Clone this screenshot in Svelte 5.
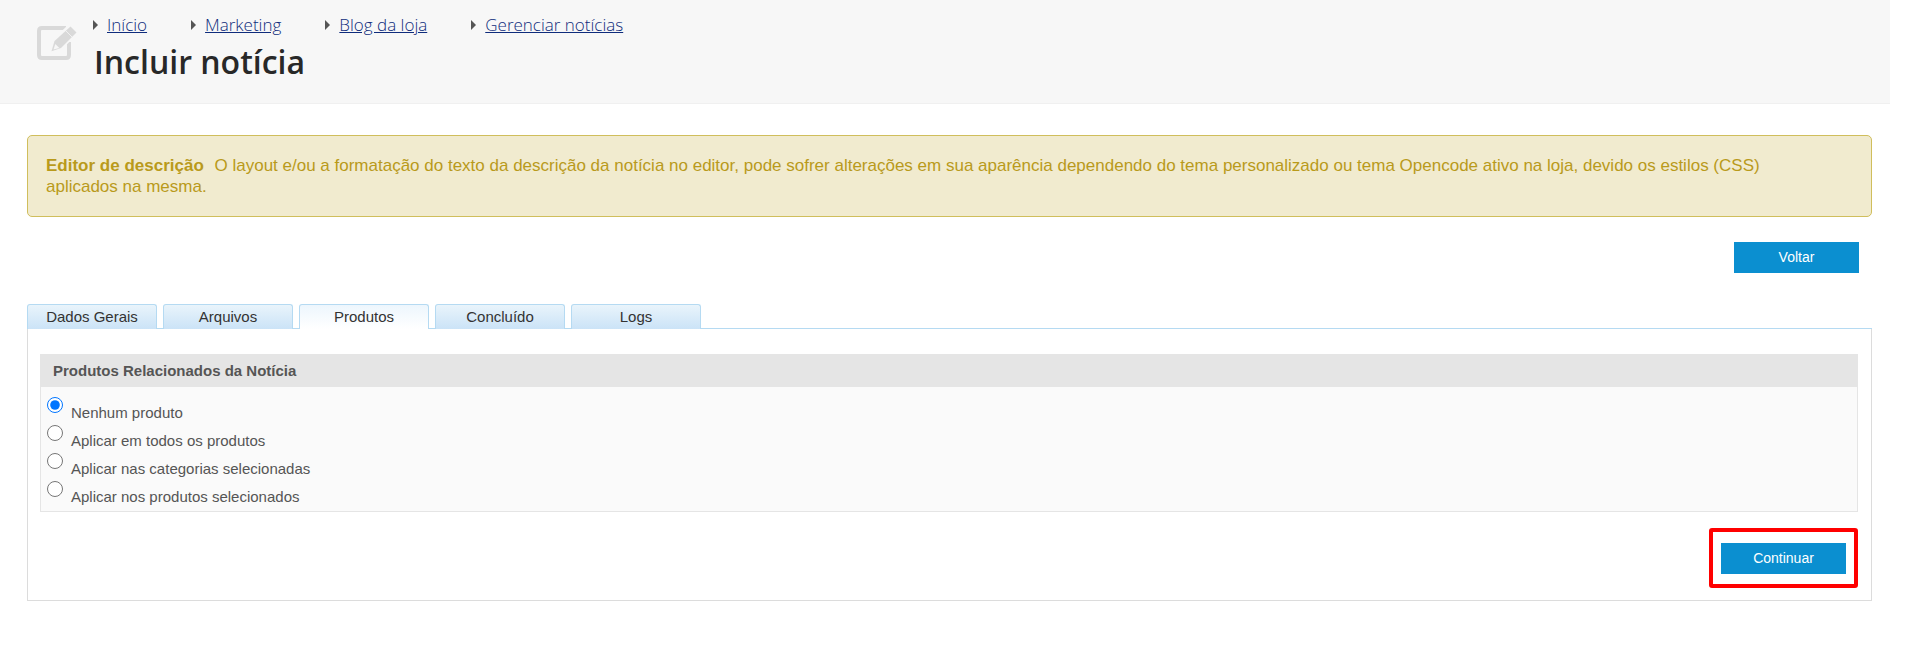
<script lang="ts">
	const breadcrumbs = ['Início', 'Marketing', 'Blog da loja', 'Gerenciar notícias'];
	const tabs = ['Dados Gerais', 'Arquivos', 'Produtos', 'Concluído', 'Logs'];
	const options = [
		{ value: 'none', label: 'Nenhum produto' },
		{ value: 'all', label: 'Aplicar em todos os produtos' },
		{ value: 'categories', label: 'Aplicar nas categorias selecionadas' },
		{ value: 'products', label: 'Aplicar nos produtos selecionados' }
	];

	let activeTab = 'Produtos';
	let related = 'none';

	function back() {
		activeTab = tabs[Math.max(tabs.indexOf(activeTab) - 1, 0)];
	}

	function next() {
		activeTab = tabs[Math.min(tabs.indexOf(activeTab) + 1, tabs.length - 1)];
	}
</script>

<div class="page">
	<header>
		<svg class="edit-icon" width="41" height="36" viewBox="0 0 41 36" aria-hidden="true">
			<path
				d="M30 2H6Q3 2 3 5v24q0 3 3 3h24q3 0 3-3V16"
				fill="none"
				stroke="#d9d9d9"
				stroke-width="4"
			/>
			<path d="M13 28L16.500 14L34 -3L43 6L25.500 24Z" fill="#f7f7f7" />
			<path d="M15.500 25.300L18.500 15L34.500 0.500L40.500 6.500L25 22Z" fill="#d9d9d9" />
			<path d="M17.500 23.500l1.800-5.500 4 4z" fill="#f7f7f7" />
			<path d="M29.500 4.500l6.500 6.500" stroke="#f7f7f7" stroke-width="0.8" />
		</svg>
		<div class="heading">
			<nav aria-label="Navegação">
				<ul>
					{#each breadcrumbs as crumb}
						<li><a href="#top">{crumb}</a></li>
					{/each}
				</ul>
			</nav>
			<h1>Incluir notícia</h1>
		</div>
	</header>

	<main>
		<p class="alert">
			<strong>Editor de descrição</strong>
			O layout e/ou a formatação do texto da descrição da notícia no editor, pode sofrer alterações em
			sua aparência dependendo do tema personalizado ou tema Opencode ativo na loja, devido os estilos
			(CSS) aplicados na mesma.
		</p>

		<div class="actions">
			<button type="button" class="btn" on:click={back}>Voltar</button>
		</div>

		<div class="tabs" role="tablist">
			{#each tabs as tab}
				<button
					type="button"
					role="tab"
					class="tab"
					class:active={tab === activeTab}
					aria-selected={tab === activeTab}
					on:click={() => (activeTab = tab)}
				>
					{tab}
				</button>
			{/each}
		</div>

		<section class="panel">
			<div class="box">
				<h2>Produtos Relacionados da Notícia</h2>
				<div class="options">
					{#each options as option}
						<label>
							<input type="radio" name="related" value={option.value} bind:group={related} />
							<span>{option.label}</span>
						</label>
					{/each}
				</div>
			</div>
			<div class="footer">
				<div class="highlight">
					<button type="button" class="btn" on:click={next}>Continuar</button>
				</div>
			</div>
		</section>
	</main>
</div>

<style>
	.page {
		margin-right: 15px;
		font-family: 'Liberation Sans', Arial, sans-serif;
		color: #555;
	}

	header {
		display: flex;
		gap: 16px;
		height: 104px;
		box-sizing: border-box;
		padding: 12px 36px 0;
		border-bottom: 1px solid #f0f0f0;
		background: #f7f7f7;
		font-family: 'Open Sans', sans-serif;
	}

	.edit-icon {
		flex-shrink: 0;
		margin-top: 14px;
	}

	ul {
		display: flex;
		gap: 44px;
		margin: 0;
		padding: 0;
		list-style: none;
	}

	li {
		display: flex;
		align-items: center;
		gap: 9px;
		font-size: 17px;
		line-height: 26px;
	}

	li::before {
		content: '';
		border: 5px solid transparent;
		border-left-color: #555;
		border-right-width: 0;
	}

	li a {
		color: #0f2c7c;
		font-weight: 300;
	}

	h1 {
		margin: 2px 0 0 1px;
		color: #282828;
		font-size: 32px;
		font-weight: 600;
		line-height: 44px;
	}

	main {
		padding: 31px 18px 0 27px;
	}

	.alert {
		margin: 0;
		padding: 19px 40px 19px 18px;
		border: 1px solid #d0be5c;
		border-radius: 5px;
		background: #f1ebcf;
		color: #b99a1b;
		font-size: 17px;
		line-height: 21px;
	}

	.alert strong {
		margin-right: 6px;
	}

	.actions {
		display: flex;
		justify-content: flex-end;
		padding: 25px 13px 31px;
	}

	.btn {
		display: block;
		width: 125px;
		height: 31px;
		padding: 0 0 2px;
		border: 0;
		background: #0b8fd0;
		color: #fff;
		font-family: inherit;
		font-size: 14px;
		cursor: pointer;
	}

	.tabs {
		display: flex;
		gap: 6px;
		border-bottom: 1px solid #b5daf2;
	}

	.tab {
		width: 130px;
		height: 25px;
		margin-bottom: -1px;
		padding: 0 0 2px;
		border: 1px solid #b5daf2;
		border-bottom: 0;
		border-radius: 3px 3px 0 0;
		background: linear-gradient(#e9f4fb, #cbe3f7);
		color: #333;
		font-family: inherit;
		font-size: 15px;
		cursor: pointer;
	}

	.tab.active {
		background: linear-gradient(#edf6fd, #fff);
	}

	.panel {
		padding: 25px 13px 12px 12px;
		border: 1px solid #dcdcdc;
		border-top: 0;
	}

	.box {
		border: 1px solid #e5e5e5;
		background: #fafafa;
	}

	h2 {
		margin: 0;
		padding: 0 12px;
		background: #e5e5e5;
		font-size: 15px;
		line-height: 32px;
	}

	.options {
		padding: 10px 6px 2px;
	}

	label {
		display: flex;
		gap: 8px;
		height: 28px;
		font-size: 15px;
	}

	label span {
		padding-top: 7px;
	}

	input {
		width: 16px;
		height: 16px;
		margin: 0;
		accent-color: #0075ff;
	}

	.footer {
		display: flex;
		justify-content: flex-end;
		margin-top: 16px;
	}

	.highlight {
		padding: 11px 8px 10px;
		border: 4px solid #f00;
		border-radius: 3px;
	}
</style>
